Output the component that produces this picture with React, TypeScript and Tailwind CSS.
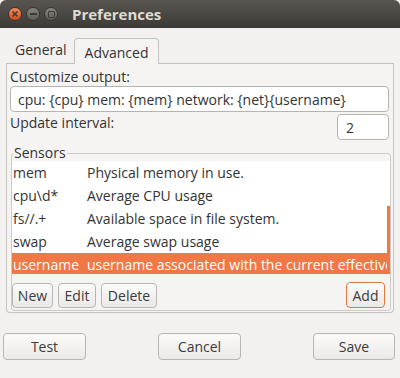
import React from "react";

const rows = [
  ["mem", "Physical memory in use."],
  ["cpu\\d*", "Average CPU usage"],
  ["fs//.+", "Available space in file system."],
  ["swap", "Average swap usage"],
  ["username", "username associated with the current effective user"],
];

function Btn({ children, className = "" }: { children: React.ReactNode; className?: string }) {
  return (
    <div
      className={
        "flex items-center justify-center rounded-[4px] border border-[#b9b6b1] bg-gradient-to-b from-[#fbfbfa] to-[#ebe9e7] text-[#3c3c3c] " +
        className
      }
    >
      {children}
    </div>
  );
}

export default function App() {
  return (
    <div
      className="w-[400px] h-[378px] bg-[#f2f1f0] flex flex-col text-[14px] text-[#333333] overflow-hidden"
      style={{ fontFamily: '"Open Sans", "Noto Sans", sans-serif' }}
    >
      {/* title bar */}
      <div className="h-[28px] shrink-0 rounded-t-[6px] bg-gradient-to-b from-[#59554f] to-[#3c3b37] flex items-center pl-[8px]">
        <div className="flex gap-[4px] items-center">
          <div className="w-[14px] h-[14px] rounded-full bg-gradient-to-b from-[#f58b5b] to-[#dc4a14] border border-[#3a3632] flex items-center justify-center">
            <svg width="8" height="8" viewBox="0 0 8 8">
              <path d="M1.5 1.5 L6.5 6.5 M6.5 1.5 L1.5 6.5" stroke="#3c3b37" strokeWidth="1.6" />
            </svg>
          </div>
          <div className="w-[14px] h-[14px] rounded-full bg-gradient-to-b from-[#8a8680] to-[#5f5c57] border border-[#3a3632] flex items-center justify-center">
            <div className="w-[7px] h-[2px] bg-[#3c3b37]" />
          </div>
          <div className="w-[14px] h-[14px] rounded-full bg-gradient-to-b from-[#8a8680] to-[#5f5c57] border border-[#3a3632] flex items-center justify-center">
            <div className="w-[7px] h-[7px] border-[1.5px] border-[#3c3b37] rounded-[1px]" />
          </div>
        </div>
        <div className="ml-[14px] text-[15px] font-bold text-[#dfdbd2] leading-none">Preferences</div>
      </div>

      {/* notebook */}
      <div className="pl-[6px] pr-[6px] pt-[10px]">
        <div className="flex items-end h-[26px] border-b border-[#c6c3bf]">
          <div className="w-[66px] pl-[9px] pb-[3px]">General</div>
          <div className="w-[85px] h-[26px] ml-[2px] -mb-px border border-b-0 border-[#c6c3bf] rounded-t-[4px] bg-[#f5f4f3] flex items-center justify-center pt-[2px]">
            Advanced
          </div>
        </div>
        <div className="h-[249px] border border-t-0 border-[#c6c3bf] rounded-b-[4px] bg-[#f5f4f3] pl-[3px] pr-[3px] pt-[4px] flex flex-col">
          <div className="leading-[18px] h-[18px]">Customize output:</div>
          <div className="h-[26px] border border-[#b7b4b0] rounded-[4px] bg-white flex items-center pl-[7px] mr-[1px] whitespace-nowrap overflow-hidden">
            cpu: {"{cpu}"} mem: {"{mem}"} network: {"{net}{username}"}
          </div>
          <div className="flex mt-[2px] h-[26px]">
            <div className="leading-[18px] flex-1">Update interval:</div>
            <div className="w-[52px] h-[26px] border border-[#b7b4b0] rounded-[4px] bg-white flex items-center pl-[8px] mr-[1px]">
              2
            </div>
          </div>
          {/* Sensors frame */}
          <div className="relative mt-[13px] ml-[1px] mr-[-1px] h-[158px] border border-[#cdcac6] rounded-[3px] pt-[7px] flex flex-col">
            <div className="absolute left-[1px] top-[-10px] px-[1px] bg-[#f5f4f3] leading-[18px]">Sensors</div>
            <div className="relative h-[113px] bg-white overflow-hidden">
              {rows.map(([a, b], i) => (
                <div
                  key={a}
                  className={
                    "h-[23px] flex items-center whitespace-nowrap " +
                    (i === 4 ? "bg-[#f07746] text-white" : "")
                  }
                >
                  <div className="w-[75px] pl-[1px] shrink-0">{a}</div>
                  <div>{b}</div>
                </div>
              ))}
              <div className="absolute right-0 top-[45px] w-[3px] h-[68px] bg-[#f07746]" />
            </div>
            <div className="flex mt-[9px] pl-[0px] pr-[5px] gap-[5px]">
              <Btn className="w-[41px] h-[25px]">New</Btn>
              <Btn className="w-[38px] h-[25px]">Edit</Btn>
              <Btn className="w-[56px] h-[25px]">Delete</Btn>
              <div className="flex-1" />
              <Btn className="w-[39px] h-[26px] !border-[#e2773f] -mt-px">Add</Btn>
            </div>
          </div>
        </div>
      </div>

      {/* bottom buttons */}
      <div className="flex justify-between pl-[3px] pr-[5px] mt-[20px]">
        <Btn className="w-[83px] h-[27px]">Test</Btn>
        <Btn className="w-[83px] h-[27px]">Cancel</Btn>
        <Btn className="w-[82px] h-[27px]">Save</Btn>
      </div>
    </div>
  );
}
